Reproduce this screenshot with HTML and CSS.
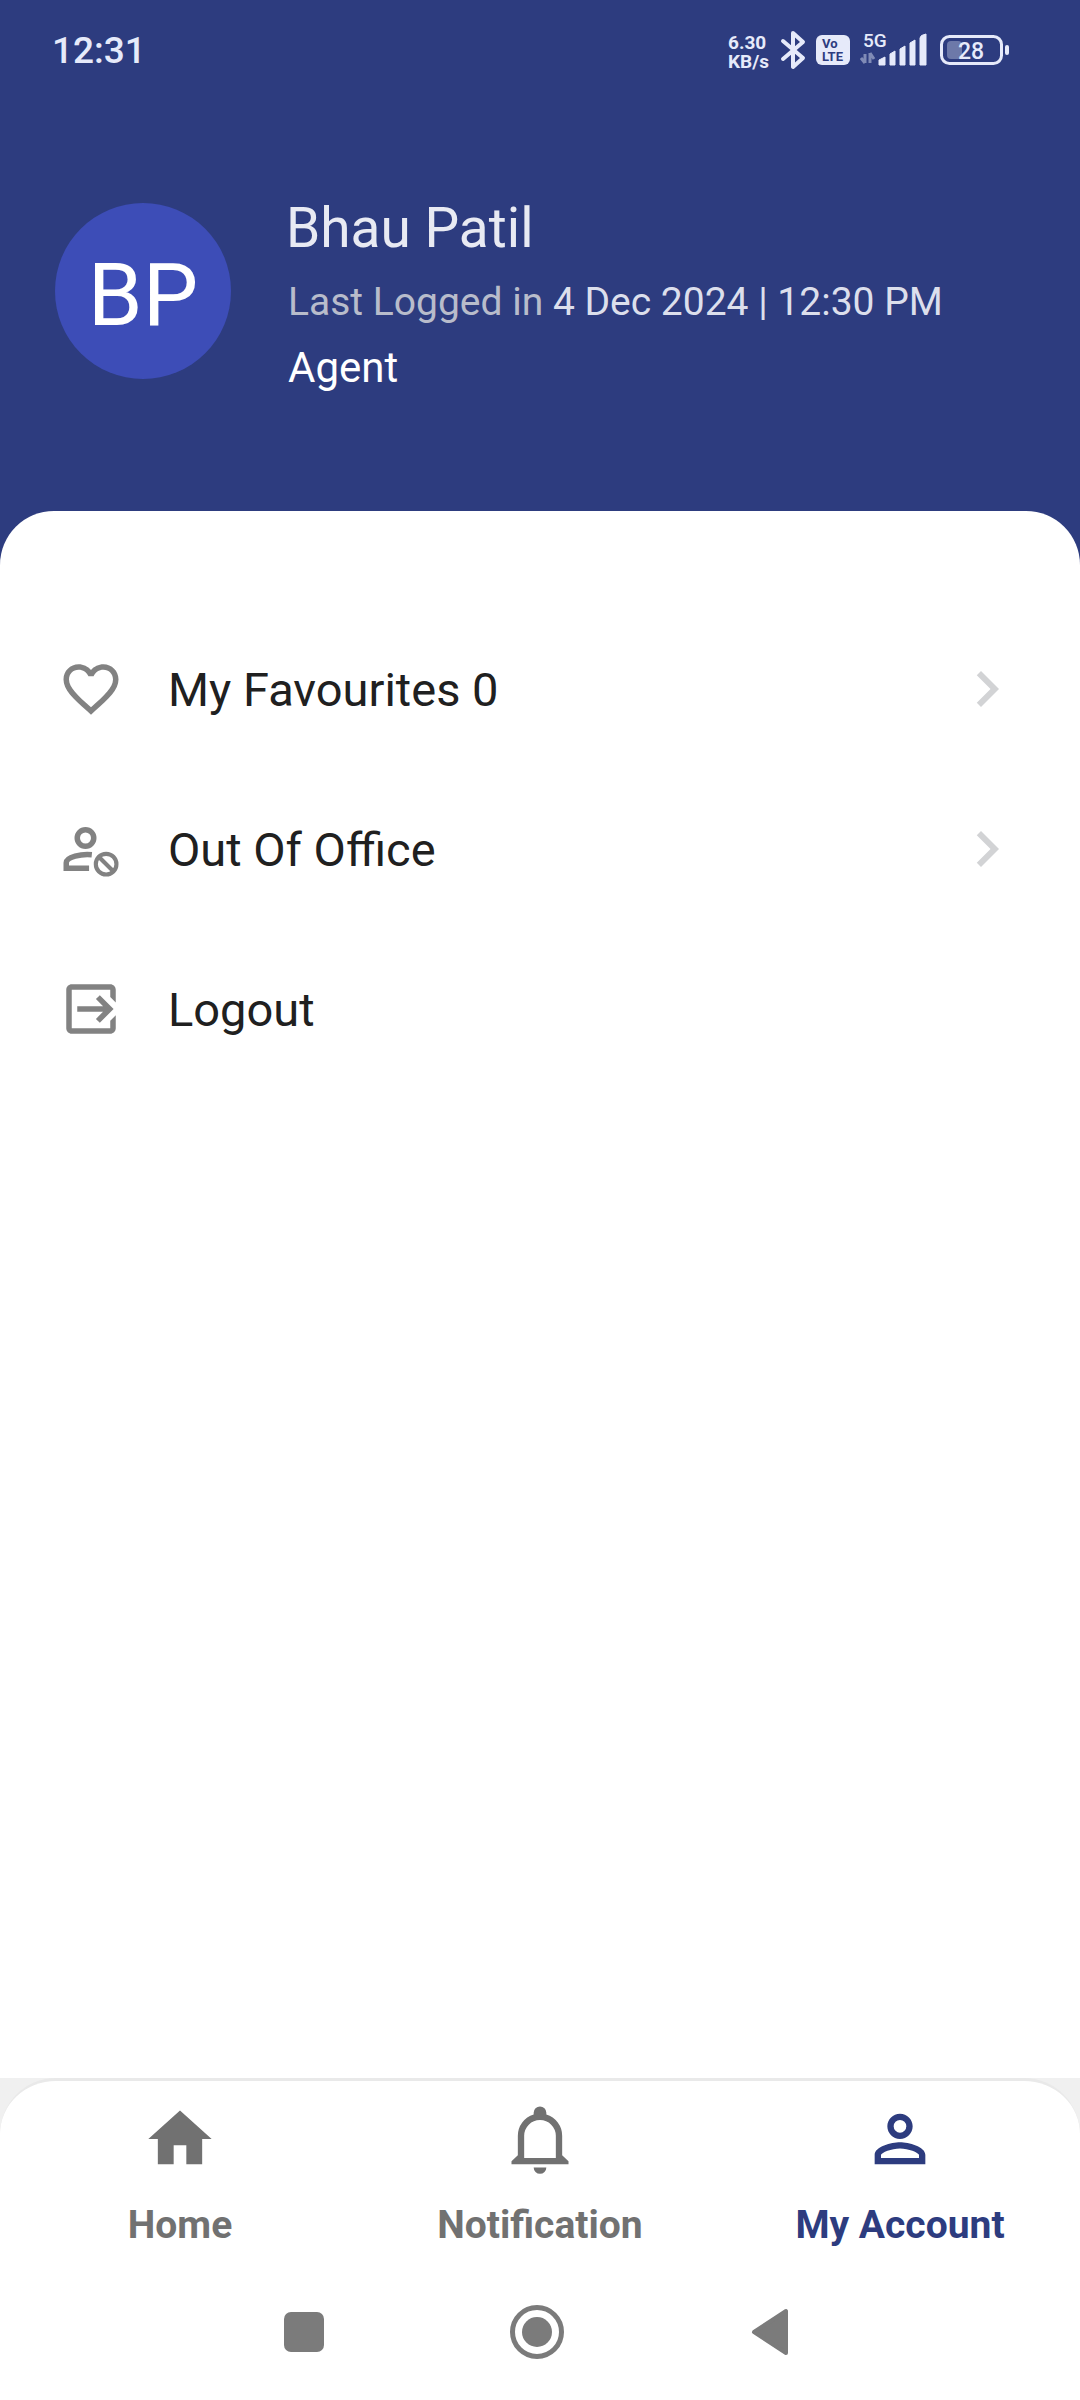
FILE: index.html
```html
<!DOCTYPE html>
<html lang="en">
<head>
<meta charset="utf-8">
<meta name="viewport" content="width=device-width, initial-scale=1">
<title>My Account</title>
<link rel="stylesheet" href="styles.css">
</head>
<body>
<div class="status-bar">
  <time class="status-time">12:31</time>
  <div class="status-icons">
    <div class="net-speed"><span>6.30</span><span>KB/s</span></div>
    <svg class="bluetooth" width="26" height="40" viewBox="0 0 26 40" aria-hidden="true">
      <path d="M3 11L23 28L13 37V3L23 12L3 29" fill="none" stroke="currentColor" stroke-width="4" stroke-linecap="round" stroke-linejoin="round"/>
    </svg>
    <svg class="volte" width="34" height="30" viewBox="0 0 34 30">
      <rect width="34" height="30" rx="6" fill="currentColor"/>
      <text class="volte-text" x="6" y="13">Vo</text>
      <text class="volte-text" x="6" y="26">LTE</text>
    </svg>
    <svg class="signal" width="68" height="46" viewBox="0 -5 68 46">
      <text class="signal-text" x="3" y="15">5G</text>
      <path d="M5 31V22M5 31L1 26M10 21V31M10 21L14 27" fill="none" stroke="currentColor" stroke-width="3" opacity=".45"/>
      <path d="M19 33v-5l6-3v8zM30 33V22l5-3v14zM40 33V17l5-3v19zM50 33V11l5-3v25zM60 33V6q0-3 6-4v31z" fill="currentColor" stroke="currentColor" stroke-linejoin="round"/>
    </svg>
    <svg class="battery" width="70" height="30" viewBox="0 0 70 30">
      <rect x="1.5" y="1.5" width="60" height="27" rx="8" fill="none" stroke="currentColor" stroke-width="3"/>
      <rect x="7" y="6" width="15" height="18" rx="4" fill="currentColor" opacity=".35"/>
      <rect x="65" y="10" width="4" height="10" rx="2" fill="currentColor"/>
      <text class="battery-text" x="31" y="24" text-anchor="middle">28</text>
    </svg>
  </div>
</div>

<header class="profile">
  <div class="avatar">BP</div>
  <div class="profile-info">
    <h1 class="profile-name">Bhau Patil</h1>
    <p class="profile-login">Last Logged in <span class="login-date">4 Dec 2024 | 12:30 PM</span></p>
    <p class="profile-role">Agent</p>
  </div>
</header>

<main class="sheet">
  <a class="menu-row" href="#favourites">
    <svg class="menu-icon" viewBox="0 0 24 24" aria-hidden="true"><path d="M16.5 3c-1.74 0-3.41.81-4.5 2.09C10.91 3.81 9.24 3 7.5 3 4.42 3 2 5.42 2 8.5c0 3.78 3.4 6.86 8.55 11.54L12 21.35l1.45-1.32C18.6 15.36 22 12.28 22 8.5 22 5.42 19.58 3 16.5 3zm-4.4 15.55l-.1.1-.1-.1C7.14 14.24 4 11.39 4 8.5 4 6.5 5.5 5 7.5 5c1.54 0 3.04.99 3.57 2.36h1.87C13.46 5.99 14.96 5 16.5 5c2 0 3.5 1.5 3.5 3.5 0 2.89-3.14 5.74-7.9 10.05z"/></svg>
    <span class="menu-label">My Favourites 0</span>
    <svg class="chevron" viewBox="0 0 24 24" aria-hidden="true"><path d="M10 6L8.59 7.41 13.17 12l-4.58 4.59L10 18l6-6z"/></svg>
  </a>
  <a class="menu-row" href="#out-of-office">
    <svg class="menu-icon" viewBox="0 0 24 24" aria-hidden="true"><g fill="none" stroke="currentColor" stroke-width="2"><circle cx="10" cy="8" r="3"/><path d="M12.3 14.1C8.5 13.7 3 14.9 3 17v2h8.3"/><circle cx="17.5" cy="17.5" r="3.75" stroke-width="1.5"/><path d="M14.9 14.9l5.2 5.2" stroke-width="1.5"/></g></svg>
    <span class="menu-label">Out Of Office</span>
    <svg class="chevron" viewBox="0 0 24 24" aria-hidden="true"><path d="M10 6L8.59 7.41 13.17 12l-4.58 4.59L10 18l6-6z"/></svg>
  </a>
  <button class="menu-row" type="button">
    <svg class="menu-icon" viewBox="0 0 24 24" aria-hidden="true"><path d="M21 9.6V5c0-1.1-.9-2-2-2H5c-1.1 0-2 .9-2 2v14c0 1.1.9 2 2 2h14c1.1 0 2-.9 2-2v-4.7l-2 2V19H5V5h14v2.6z"/><path d="M7 12h11.5M14.5 7.7l4.3 4.3-4.3 4.3" fill="none" stroke="currentColor" stroke-width="2"/></svg>
    <span class="menu-label">Logout</span>
  </button>
</main>

<footer class="bottom">
  <nav class="tabs">
    <a class="tab" href="#home">
      <svg class="tab-icon" viewBox="0 0 24 24" aria-hidden="true"><path d="M10 20v-6h4v6h5v-8h3L12 3 2 12h3v8z"/></svg>
      <span>Home</span>
    </a>
    <a class="tab" href="#notification">
      <svg class="tab-icon" viewBox="0 0 24 24" aria-hidden="true"><path fill-rule="evenodd" d="M12 1.7a2 2 0 0 0-2 2v.6A7 7 0 0 0 5 11v6.1l-2 1.9v1h18v-1l-2-1.9V11a7 7 0 0 0-5-6.7v-.6a2 2 0 0 0-2-2zM7 18v-7a5 5 0 0 1 10 0v7zM10 21h4a2 2 0 0 1-4 0z"/></svg>
      <span>Notification</span>
    </a>
    <a class="tab tab-active" href="#account" aria-current="page">
      <svg class="tab-icon" viewBox="0 0 24 24" aria-hidden="true"><path d="M12 6a2 2 0 1 1 0 4 2 2 0 0 1 0-4m0 9c2.7 0 5.8 1.29 6 2v1H6v-.99c.2-.72 3.3-2.01 6-2.01m0-11C9.79 4 8 5.79 8 8s1.79 4 4 4 4-1.79 4-4-1.79-4-4-4zm0 9c-2.67 0-8 1.34-8 4v3h16v-3c0-2.66-5.33-4-8-4z"/></svg>
      <span>My Account</span>
    </a>
  </nav>
  <div class="system-nav">
    <button type="button" class="system-button" aria-label="Recent apps"><svg width="56" height="56" viewBox="0 0 56 56"><rect x="8" y="8" width="40" height="40" rx="7"/></svg></button>
    <button type="button" class="system-button" aria-label="Home screen"><svg width="56" height="56" viewBox="0 0 56 56"><circle cx="28" cy="28" r="24.5" fill="none" stroke="currentColor" stroke-width="5"/><circle cx="28" cy="28" r="15"/></svg></button>
    <button type="button" class="system-button" aria-label="Back"><svg width="56" height="56" viewBox="0 0 56 56"><path d="M12 28L44 7V49z" stroke="currentColor" stroke-width="4" stroke-linejoin="round"/></svg></button>
  </div>
</footer>
</body>
</html>
```
FILE: styles.css
```css
* {
  box-sizing: border-box;
}

body {
  margin: 0;
  min-height: 100vh;
  display: flex;
  flex-direction: column;
  background: #2d3c7f;
  color: #202020;
  font-family: Roboto, "Liberation Sans", sans-serif;
}

a {
  color: inherit;
  text-decoration: none;
}

button {
  padding: 0;
  border: 0;
  background: none;
  color: inherit;
  font: inherit;
  text-align: left;
}

svg {
  flex: none;
  fill: currentColor;
}

h1,
p {
  margin: 0;
}

/* Status bar */
.status-bar {
  display: flex;
  align-items: center;
  justify-content: space-between;
  height: 100px;
  padding: 0 70px 0 52px;
  color: #e6eafa;
}

.status-time {
  font-size: 37px;
  font-weight: 500;
}

.status-icons {
  display: flex;
  align-items: center;
}

.net-speed {
  display: flex;
  flex-direction: column;
  padding-top: 4px;
  font-size: 19px;
  font-weight: 700;
  line-height: 19px;
}

.bluetooth {
  margin-left: 11px;
}

.volte {
  margin-left: 10px;
}

.volte-text {
  fill: #2d3c7f;
  font-size: 13px;
  font-weight: 700;
}

.signal {
  margin-left: 10px;
}

.signal-text {
  font-size: 19px;
  font-weight: 500;
}

.battery {
  margin-left: 12px;
}

.battery-text {
  font-size: 23px;
  font-weight: 500;
}

/* Profile header */
.profile {
  display: flex;
  align-items: flex-start;
  gap: 55px;
  padding: 89px 55px 112px;
}

.avatar {
  flex: none;
  display: flex;
  align-items: center;
  justify-content: center;
  width: 176px;
  height: 176px;
  margin-top: 14px;
  padding-top: 6px;
  border-radius: 50%;
  background: #3d4db7;
  color: #fff;
  font-size: 88px;
}

.profile-name {
  color: #e8eaf3;
  font-size: 55px;
  font-weight: 400;
  line-height: 78px;
}

.profile-login {
  padding-left: 2px;
  color: #b8bccb;
  font-size: 39px;
  line-height: 70px;
}

.login-date {
  color: #dcdfec;
}

.profile-role {
  padding-left: 2px;
  color: #fff;
  font-size: 42px;
  line-height: 62px;
}

/* Menu sheet */
.sheet {
  flex: 1;
  padding: 98px 57px 0 58px;
  border-radius: 54px 54px 0 0;
  background: #fff;
}

.menu-row {
  display: flex;
  align-items: center;
  gap: 44px;
  width: 100%;
  height: 160px;
}

.menu-icon {
  width: 66px;
  height: 66px;
  color: #828282;
}

.menu-label {
  flex: 1;
  font-size: 47px;
}

.chevron {
  width: 72px;
  height: 72px;
  color: #d2d3d5;
}

/* Bottom navigation */
.bottom {
  background: #f0f0f0;
}

.tabs {
  display: grid;
  grid-template-columns: repeat(3, 1fr);
  padding: 20px 0 15px;
  border-top: 3px solid #e9e9e9;
  border-radius: 56px 56px 0 0;
  background: #fff;
}

.tab {
  display: flex;
  flex-direction: column;
  align-items: center;
  gap: 24px;
  color: #717171;
  font-size: 39px;
  font-weight: 700;
  line-height: 48px;
}

.tab-icon {
  width: 76px;
  height: 76px;
}

.tab-active {
  color: #2d3c7f;
}

.system-nav {
  display: flex;
  align-items: center;
  justify-content: center;
  gap: 177px;
  height: 136px;
  padding-right: 6px;
  background: #fff;
  color: #7b7b7b;
}

.system-button,
.system-button svg {
  display: block;
}
```
